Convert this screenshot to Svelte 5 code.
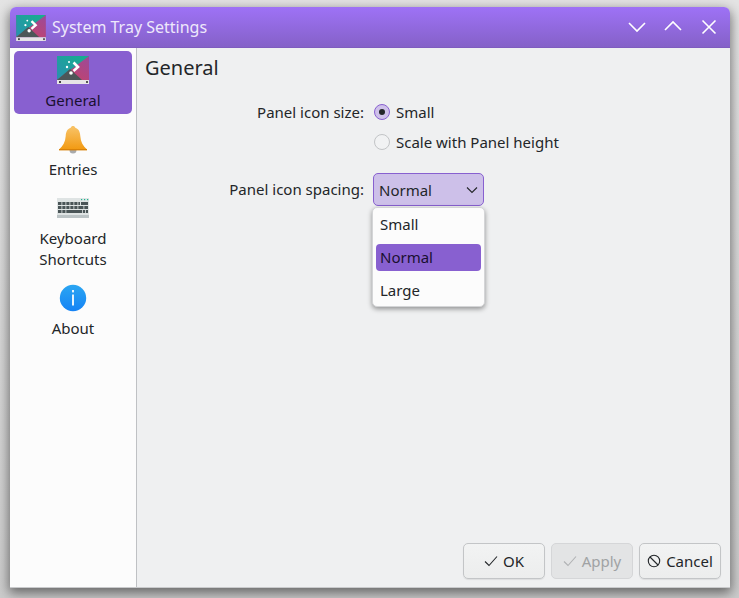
<script lang="ts">
	const navItems = [
		{ id: 'general', label: ['General'], active: true },
		{ id: 'entries', label: ['Entries'], active: false },
		{ id: 'keys', label: ['Keyboard', 'Shortcuts'], active: false },
		{ id: 'about', label: ['About'], active: false }
	];
	const spacing = ['Small', 'Normal', 'Large'];
	let selected = $state('Normal');
</script>

{#snippet trayIcon(w, h, key)}
	<svg width={w} height={h} viewBox="0 0 32 28" aria-hidden="true">
		<defs>
			<linearGradient id="teal-{key}" x1="0" y1="1" x2="1" y2="0">
				<stop offset="0" stop-color="#2a8fb0" />
				<stop offset="1" stop-color="#15b08c" />
			</linearGradient>
			<linearGradient id="rose-{key}" x1="1" y1="0" x2="0" y2="1">
				<stop offset="0" stop-color="#9a4a9c" />
				<stop offset="1" stop-color="#d0405c" />
			</linearGradient>
		</defs>
		<rect width="32" height="24" fill="url(#rose-{key})" />
		<path d="M0 0H32L0 24Z" fill="url(#teal-{key})" />
		<path d="M0 24L13 13L25 24Z" fill="#4d5658" />
		<rect y="24" width="32" height="4" fill="#e6e4e6" />
		<rect x="2" y="25" width="2" height="2" fill="#444" />
		<rect x="29" y="25" width="2" height="2" fill="#555" />
		<path d="M16.5 6.5L21 11L16.5 15" fill="none" stroke="#fff" stroke-width="2.6" />
		<circle cx="12" cy="6" r="1" fill="#fff" />
		<circle cx="10" cy="11" r="1.2" fill="#fff" />
		<circle cx="14" cy="17" r="1.8" fill="#fff" />
	</svg>
{/snippet}

<div class="stage">
	<div class="window">
		<header class="titlebar">
			<div class="title-left">
				{@render trayIcon(30, 26, 'title')}
				<span>System Tray Settings</span>
			</div>
			<div class="controls">
				<svg width="18" height="12" viewBox="0 0 18 12"><path d="M1 2L9 10L17 2" /></svg>
				<svg class="up" width="18" height="12" viewBox="0 0 18 12"><path d="M1 10L9 2L17 10" /></svg>
				<svg class="close" width="16" height="16" viewBox="0 0 16 16"><path d="M1.5 1.5L14.5 14.5M14.5 1.5L1.5 14.5" /></svg>
			</div>
		</header>

		<div class="body">
			<nav class="sidebar">
				{#each navItems as item}
					<div class="nav-item" class:active={item.active}>
						<div class="nav-icon">
							{#if item.id === 'general'}
								{@render trayIcon(32, 28, 'nav')}
							{:else if item.id === 'entries'}
								<svg width="32" height="32" viewBox="0 0 32 32" aria-hidden="true">
									<defs>
										<linearGradient id="bell" x1="0" y1="0" x2="0" y2="1">
											<stop offset="0" stop-color="#f8c46a" />
											<stop offset="1" stop-color="#f29a12" />
										</linearGradient>
									</defs>
									<path d="M12.5 27a3.5 3.5 0 0 0 7 0Z" fill="#a9abad" />
									<path d="M14 4.5C14 2.5 18 2.5 18 4.5C22 6 23 9 23.3 13C23.7 19 26 23 30 26.5H2C6 23 8.3 19 8.7 13C9 9 10 6 14 4.5Z" fill="url(#bell)" />
									<rect x="2" y="26" width="28" height="1.4" fill="#d98208" />
								</svg>
							{:else if item.id === 'keys'}
								<svg width="32" height="20" viewBox="0 0 32 20" aria-hidden="true">
									<rect width="32" height="20" fill="#dfe4e4" />
									<rect y="17" width="32" height="3" fill="#bcc4c6" />
									<g fill="#4a5557">
										<rect x="1" y="4" width="22" height="3" />
										<rect x="24" y="4" width="7" height="3" />
										<rect x="1" y="8" width="30" height="3" />
										<rect x="1" y="12" width="30" height="3" />
									</g>
									<g fill="#dfe4e4">
										<rect x="4.5" y="4" width="0.8" height="11" />
										<rect x="8.5" y="4" width="0.8" height="11" />
										<rect x="12.5" y="4" width="0.8" height="7" />
										<rect x="16.5" y="4" width="0.8" height="7" />
										<rect x="20.5" y="4" width="0.8" height="7" />
										<rect x="26.5" y="8" width="0.8" height="3" />
										<rect x="25" y="12" width="0.8" height="3" />
										<rect x="28" y="12" width="0.8" height="3" />
									</g>
									<g fill="#1fb58f">
										<rect x="24" y="1" width="1.2" height="1.2" />
										<rect x="27" y="1" width="1.2" height="1.2" />
										<rect x="30" y="1" width="1.2" height="1.2" />
									</g>
								</svg>
							{:else}
								<svg width="28" height="28" viewBox="0 0 28 28" aria-hidden="true">
									<defs>
										<linearGradient id="info" x1="0" y1="0" x2="0" y2="1">
											<stop offset="0" stop-color="#2ba6f2" />
											<stop offset="1" stop-color="#1583f5" />
										</linearGradient>
									</defs>
									<circle cx="14" cy="14" r="13.2" fill="url(#info)" />
									<rect x="13" y="6" width="2" height="2.4" fill="#e8f4fd" />
									<rect x="13" y="10.5" width="2" height="11" fill="#e8f4fd" />
								</svg>
							{/if}
						</div>
						<div class="nav-label">
							{#each item.label as line}
								<div>{line}</div>
							{/each}
						</div>
					</div>
				{/each}
			</nav>

			<main class="content">
				<h1>General</h1>
				<div class="form">
					<div class="form-label">Panel icon size:</div>
					<div class="radios">
						<label class="radio">
							<span class="dot checked"></span>
							<span>Small</span>
						</label>
						<label class="radio">
							<span class="dot"></span>
							<span>Scale with Panel height</span>
						</label>
					</div>
					<div class="form-label combo-label">Panel icon spacing:</div>
					<div class="combo-wrap">
						<div class="combo">
							<span>{selected}</span>
							<svg width="12" height="8" viewBox="0 0 12 8"><path d="M1 1.5L6 6.5L11 1.5" /></svg>
						</div>
						<ul class="popup">
							{#each spacing as opt}
								<li class:current={opt === selected}>{opt}</li>
							{/each}
						</ul>
					</div>
				</div>
				<div class="spacer"></div>
				<footer class="buttons">
					<button>
						<svg width="14" height="12" viewBox="0 0 14 12"><path d="M1 6.5L5 10.5L13 1.5" /></svg>
						OK
					</button>
					<button class="disabled">
						<svg width="14" height="12" viewBox="0 0 14 12"><path d="M1 6.5L5 10.5L13 1.5" /></svg>
						Apply
					</button>
					<button>
						<svg width="14" height="14" viewBox="0 0 14 14"><circle cx="7" cy="7" r="5.7" /><path d="M3 3L11 11" /></svg>
						Cancel
					</button>
				</footer>
			</main>
		</div>
	</div>
</div>

<style>
	:global(body) {
		margin: 0;
		background: #d8d8d8;
		overflow: hidden;
	}
	.stage {
		width: 739px;
		height: 598px;
		box-sizing: border-box;
		padding: 7px 0 0 10px;
		overflow: hidden;
		background: linear-gradient(#e4e4e4, #cccccc);
	}
	.window {
		width: 720px;
		height: 581px;
		display: flex;
		flex-direction: column;
		border-radius: 6px 6px 0 0;
		box-shadow: 0 4px 12px 1px rgba(0, 0, 0, 0.5);
		font-family: 'Noto Sans', sans-serif;
		font-size: 15px;
		color: #232629;
		overflow: hidden;
	}
	.titlebar {
		height: 41px;
		flex: none;
		display: flex;
		align-items: center;
		justify-content: space-between;
		background: linear-gradient(#9e72f6, #8561c8);
		color: #eee8fb;
		font-size: 16px;
		border-bottom: 1px solid #7f5cbf;
		box-sizing: border-box;
	}
	.title-left {
		display: flex;
		align-items: center;
		gap: 6px;
		padding: 0 0 0 6px;
	}
	.title-left svg {
		margin-top: 1px;
	}
	.controls {
		display: flex;
		align-items: center;
		gap: 18px;
		padding-right: 13px;
	}
	.controls .up {
		margin-bottom: 2px;
	}
	.controls .close {
		margin-left: 1px;
	}
	.controls path {
		fill: none;
		stroke: #fff;
		stroke-width: 1.6;
	}
	.body {
		flex: 1;
		display: flex;
		min-height: 0;
		border-bottom: 1px solid #c9cacc;
	}
	.sidebar {
		width: 127px;
		flex: none;
		box-sizing: border-box;
		background: #fcfcfc;
		border-right: 1px solid #bfc1c4;
		padding: 3px 4px 0;
		display: flex;
		flex-direction: column;
		gap: 6px;
	}
	.nav-item {
		display: flex;
		flex-direction: column;
		align-items: center;
		padding: 3px 0;
		border-radius: 5px;
		line-height: 21px;
		text-align: center;
	}
	.nav-item.active {
		background: #8860d0;
		color: #1a1030;
	}
	.nav-icon {
		height: 32px;
		display: flex;
		align-items: center;
		justify-content: center;
		margin-bottom: 4px;
	}
	.content {
		flex: 1;
		display: flex;
		flex-direction: column;
		background: #eff0f1;
		min-width: 0;
	}
	h1 {
		margin: 6px 0 0 8px;
		font-size: 20px;
		font-weight: 400;
		line-height: 27px;
	}
	.form {
		margin-top: 16px;
		display: grid;
		grid-template-columns: 227px 1fr;
		column-gap: 9px;
		row-gap: 16px;
	}
	.form-label {
		text-align: right;
		line-height: 30px;
	}
	.radios {
		display: flex;
		flex-direction: column;
	}
	.radio {
		display: flex;
		align-items: center;
		gap: 6px;
		height: 30px;
	}
	.dot {
		width: 16px;
		height: 16px;
		box-sizing: border-box;
		margin-left: 1px;
		border-radius: 50%;
		border: 1px solid #c2c4c6;
		background: #f1f2f3;
		display: flex;
		align-items: center;
		justify-content: center;
		flex: none;
	}
	.dot.checked {
		border-color: #8860d0;
		background: #cfc1ea;
	}
	.dot.checked::after {
		content: '';
		width: 6px;
		height: 6px;
		border-radius: 50%;
		background: #232629;
	}
	.combo-label {
		line-height: 33px;
	}
	.combo-wrap {
		position: relative;
	}
	.combo {
		width: 111px;
		height: 33px;
		box-sizing: border-box;
		border: 1px solid #8860d0;
		border-radius: 5px;
		background: #cdc0e9;
		display: flex;
		align-items: center;
		justify-content: space-between;
		padding: 0 4px 0 5px;
	}
	.combo svg {
		margin-right: 1px;
	}
	.combo path {
		fill: none;
		stroke: #232629;
		stroke-width: 1.1;
	}
	.popup {
		position: absolute;
		top: 34px;
		left: -1px;
		width: 113px;
		height: 100px;
		box-sizing: border-box;
		margin: 0;
		padding: 3px;
		list-style: none;
		background: #fcfcfc;
		border: 1px solid #d4d5d7;
		border-radius: 5px;
		box-shadow: 0 2px 5px rgba(0, 0, 0, 0.4);
	}
	.popup li {
		height: 27px;
		line-height: 26px;
		margin-bottom: 6px;
		padding: 0 4px;
		border-radius: 4px;
	}
	.popup li.current {
		background: #8860d0;
		color: #1a1030;
	}
	.spacer {
		flex: 1;
	}
	.buttons {
		display: flex;
		justify-content: flex-end;
		gap: 6px;
		padding: 0 9px 8px 0;
	}
	button {
		width: 82px;
		height: 36px;
		box-sizing: border-box;
		border: 1px solid #c3c5c7;
		border-radius: 5px;
		background: linear-gradient(#f2f3f3, #eceded);
		box-shadow: 0 1px 1px rgba(0, 0, 0, 0.08);
		font: inherit;
		color: #232629;
		display: flex;
		align-items: center;
		justify-content: center;
		gap: 5px;
		padding: 0;
	}
	button svg {
		fill: none;
		stroke: #232629;
		stroke-width: 1.1;
	}
	button.disabled {
		background: #e3e4e5;
		border-color: #d5d6d8;
		box-shadow: none;
		color: #a0a2a4;
	}
	button.disabled svg {
		stroke: #b0b2b4;
	}
</style>
